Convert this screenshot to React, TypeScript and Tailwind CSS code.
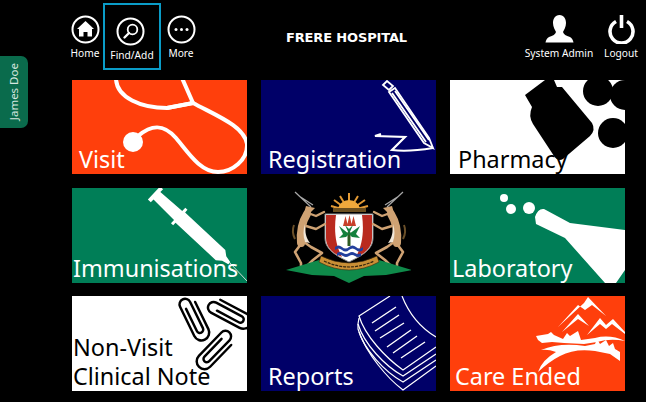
import React from 'react';

function NavItem({ label, children, boxed }: { label: string; children: React.ReactNode; boxed?: boolean }) {
  return (
    <div className={`flex h-[67px] flex-col items-center pt-[12px] ${boxed ? 'w-[58px] border-2 border-[#0a9cc7] pt-[10px]' : 'w-[34px]'}`}>
      <div className={`h-[29px] w-[29px] ${boxed ? 'mr-[3px]' : ''}`}>{children}</div>
      <span className="mt-[2px] whitespace-nowrap text-[10.2px] leading-[15px] text-white">{label}</span>
    </div>
  );
}

function Tile({ bg, dark, label, children }: { bg: string; dark?: boolean; label: React.ReactNode; children: React.ReactNode }) {
  return (
    <div className={`relative overflow-hidden ${bg}`}>
      <svg viewBox="0 0 175 95" className="absolute left-0 top-0 h-[95px] w-[175px]">
        {children}
      </svg>
      <div className={`absolute bottom-0 left-0 text-[23.4px] leading-[29px] ${dark ? 'text-black' : 'text-white'}`}>
        {label}
      </div>
    </div>
  );
}

function Clip({ x, y, angle }: { x: number; y: number; angle: number }) {
  return (
    <path
      transform={`translate(${x} ${y}) rotate(${angle}) scale(1.12)`}
      d="M-4 -10 V12 a3 3 0 0 0 6 0 V-14 a5 5 0 0 0 -10 0 V15 a7 7 0 0 0 14 0 V-12"
      fill="none"
      stroke="#000"
      strokeWidth="2.200"
      strokeLinecap="round"
    />
  );
}

function Antelope() {
  return (
    <g>
      <path d="M25 19 L9 4 M27 17 L13 8" stroke="#a8a8a8" strokeWidth="1.200" fill="none" />
      <path d="M8 37 C6 42 7 47 9 51" stroke="#6b5029" strokeWidth="2" fill="none" />
      <g fill="none" stroke="#cfa273" strokeLinejoin="round" strokeLinecap="round">
        <path d="M21 26 C16 34 14 44 15 55" strokeWidth="8" />
        <path d="M22 25 L30 28 L38 24" strokeWidth="2.400" />
        <path d="M20 38 L30 41 L39 36" strokeWidth="2.400" />
        <path d="M15 56 L9 64 L15 75 L15 80" strokeWidth="2.600" />
        <path d="M18 54 L25 59 L36 65 L27 72 L21 78" strokeWidth="2.600" />
      </g>
      <path d="M20 18 L29 20 L24 25 L18 25 Z" fill="#cfa273" />
      <path d="M19 36 C19 44 20 50 24 55 L19 54 C17 48 17 42 19 36 Z" fill="#f1e7d8" />
    </g>
  );
}

function Crest() {
  return (
    <svg viewBox="0 0 125 95" className="h-[95px] w-[125px]">
      {/* sun */}
      <g stroke="#e39a35" strokeWidth="2">
        <path d="M63 23 L63 5 M63 23 L54 8 M63 23 L72 8 M63 23 L48 12 M63 23 L79 12 M63 23 L45 18 M63 23 L82 18" />
      </g>
      <path d="M52 22 a11 10 0 0 1 22 0 z" fill="#f0a93c" />
      <rect x="47" y="20" width="33" height="4" fill="#6b4f1f" />
      {/* shield */}
      <path d="M39 26 H87 V50 C87 62 75 68 63 74 C51 68 39 62 39 50 Z" fill="#fff" stroke="#8c8c8c" strokeWidth="1" />
      <path d="M40 27 H50 C48 42 49 56 56 69 C46 65 40 59 40 50 Z" fill="#b92a1f" />
      <path d="M86 27 H76 C78 42 77 56 70 69 C80 65 86 59 86 50 Z" fill="#b92a1f" />
      {/* flames */}
      <path d="M57 38 L59.500 28 L62 38 Z M61 38 L63.500 27 L66 38 Z M65 38 L67.500 28 L70 38 Z" fill="#c8402a" />
      {/* tree */}
      <path d="M63 58 V44" stroke="#2d5a22" strokeWidth="3" />
      <path d="M63 46 L53 38 L57 46 L53 50 L60 49 Z M63 46 L74 38 L70 46 L74 50 L66 49 Z M63 46 L59 37 L63 41 L67 37 Z" fill="#13803c" />
      {/* waves */}
      <path d="M49 59 q3.500 -3 7 0 t7 0 t7 0 t7 0 V62 q-3.500 3 -7 0 t-7 0 t-7 0 t-7 0 Z" fill="#233f9c" />
      <path d="M51 65 q3 -2 6 0 t6 0 t6 0 t6 0 V68 q-3 2 -6 0 t-6 0 t-6 0 t-6 0 Z" fill="#233f9c" />
      <Antelope />
      <g transform="translate(126 0) scale(-1 1)">
        <Antelope />
      </g>
      {/* ground and scroll */}
      <path d="M0 82 L33 72 L63 82 L93 72 L126 82 L100 87 L78 88 L63 95 L48 88 L26 87 Z" fill="#0f8a4a" />
      <path d="M35 68 Q63 82 91 68 L93 74 Q63 90 33 74 Z" fill="#c98f35" stroke="#3a2a10" strokeWidth=".6" />
      <path d="M38 73 Q63 85 88 73" fill="none" stroke="#33240d" strokeWidth="1.200" strokeDasharray="3 1" />
    </svg>
  );
}

export default function App() {
  return (
    <div className="relative h-[402px] w-[646px] overflow-hidden bg-black font-['Noto_Sans',sans-serif]">
      <div className="absolute left-0 top-[56px] flex h-[72px] w-[28px] items-center justify-center rounded-r-[7px] bg-[#0a6b4c]">
        <span className="-rotate-90 whitespace-nowrap text-[11.5px] text-[#d5e6df]">James Doe</span>
      </div>

      <header className="flex h-[80px] items-start pl-[68px] pr-[8px] pt-[3px]">
        <NavItem label="Home">
          <svg viewBox="0 0 29 29" className="h-full w-full">
            <circle cx="14.500" cy="14.500" r="13" fill="none" stroke="#fff" strokeWidth="2" />
            <path d="M14.500 6 L23 14 H21 V21.500 H16.500 V17 H12.500 V21.500 H8 V14 H6 Z" fill="#fff" />
          </svg>
        </NavItem>
        <div className="ml-[1px]">
          <NavItem label="Find/Add" boxed>
            <svg viewBox="0 0 29 29" className="h-full w-full">
              <circle cx="14.500" cy="14.500" r="13" fill="none" stroke="#fff" strokeWidth="2" />
              <circle cx="16.500" cy="12.500" r="4.800" fill="none" stroke="#fff" strokeWidth="1.800" />
              <path d="M13 16 L8.500 20.500" stroke="#fff" strokeWidth="2.400" strokeLinecap="round" />
            </svg>
          </NavItem>
        </div>
        <div className="ml-[3px]">
          <NavItem label="More">
            <svg viewBox="0 0 29 29" className="h-full w-full">
              <circle cx="14.500" cy="14.500" r="13" fill="none" stroke="#fff" strokeWidth="2" />
              <circle cx="9" cy="14.500" r="1.500" fill="#fff" />
              <circle cx="14.500" cy="14.500" r="1.500" fill="#fff" />
              <circle cx="20" cy="14.500" r="1.500" fill="#fff" />
            </svg>
          </NavItem>
        </div>
        <h1 className="ml-[88px] mt-[27px] whitespace-nowrap font-['DejaVu_Sans',sans-serif] text-[13px] font-bold leading-4 tracking-[-0.15px] text-white">FRERE HOSPITAL</h1>
        <div className="ml-auto flex">
          <NavItem label="System Admin">
            <svg viewBox="0 0 29 29" className="h-full w-full">
              <path d="M14.500 0 C19 0 21 4 21 8 C21 12 19 15 18 17 C18.500 19 21 21 25 22 C27 23 28 25 28.500 27.500 H0.500 C1 25 2 23 4 22 C8 21 10.500 19 11 17 C10 15 8 12 8 8 C8 4 10 0 14.500 0 Z" fill="#fff" />
            </svg>
          </NavItem>
          <div className="ml-[28px]">
            <NavItem label="Logout">
              <svg viewBox="0 0 29 29" className="h-full w-full">
                <path d="M9 6.500 A11.500 11.500 0 1 0 20 6.500" fill="none" stroke="#fff" strokeWidth="3.600" />
                <path d="M14.500 0 V13" stroke="#fff" strokeWidth="3.600" />
              </svg>
            </NavItem>
          </div>
        </div>
      </header>

      <main className="ml-[72px] grid w-[553px] grid-cols-[175px_175px_175px] grid-rows-[94px_95px_95px] gap-x-[14px] gap-y-[13.5px]">
        <Tile bg="bg-[#ff3f0c]" label={<span className="block pl-[7px]">Visit</span>}>
          <g fill="none" stroke="#fff" strokeWidth="4">
            <path d="M44 -2 C44 18 70 28 95 28 L121 23 L110 -2" />
            <path d="M95 28 L121 23 C145 36 172 46 175 64 C176 80 160 92 146 92 C128 92 116 72 104 58 C92 44 80 44 66 56" />
          </g>
          <circle cx="61" cy="62" r="10" fill="#fff" />
        </Tile>
        <Tile bg="bg-[#000068]" label={<span className="block pl-[7px]">Registration</span>}>
          <g fill="none" stroke="#fff" strokeWidth="1.800">
            <path d="M122 5 L126 1 L132 6 L128 10 Z" />
            <path d="M128 12 L134 8 L168 58 L172 68 L163 63 Z" />
            <path d="M131 13 L165 62 M134 11 L168 60" />
          </g>
          <path d="M172 68 C160 70 145 72 131 70 L144 57 L114 56 L120 54" fill="none" stroke="#fff" strokeWidth="2.200" />
        </Tile>
        <Tile bg="bg-white" dark label={<span className="block pl-[8px]">Pharmacy</span>}>
          <path d="M75 15 L95 0 L104 0 L107 7 L112 7 L142 43 Q146 50 140 56 L113 79 Q108 82 104 76 L83 44 Q78 36 82 27 Z" fill="#000" />
          <circle cx="148" cy="11" r="15" fill="#000" />
          <circle cx="175" cy="15" r="15" fill="#000" />
          <circle cx="163" cy="53" r="15" fill="#000" />
        </Tile>

        <Tile bg="bg-[#007e57]" label={<span className="block pl-[1px]">Immunisations</span>}>
          <path
            transform="translate(82 5) rotate(43)"
            d="M0 -9 L4 -9 L4 -5 L33 -6 L33 -10.500 L36 -10.500 L36 -7 L91 -7 L96 -3 L103 -1.500 V1.500 L96 3 L91 7 L36 7 L36 10.500 L33 10.500 L33 6 L4 5 L4 9 L0 9 Z"
            fill="#fff"
          />
          <path d="M157 74 L175 93" stroke="#cfe3da" strokeWidth="1" />
        </Tile>
        <div className="flex items-start justify-center">
          <Crest />
        </div>
        <Tile bg="bg-[#007e57]" label={<span className="block pl-[2px]">Laboratory</span>}>
          <circle cx="54" cy="10" r="4" fill="#fff" />
          <circle cx="61" cy="21" r="5" fill="#fff" />
          <circle cx="79" cy="20" r="6" fill="#fff" />
          <path d="M85 29 Q88 20 94 21 L120 35 L175 42 V82 L166 95 H155 L115 50 L86 36 Z" fill="#fff" />
        </Tile>

        <Tile
          bg="bg-white"
          dark
          label={
            <div className="pl-[1px]">
              Non-Visit
              <br />
              Clinical Note
            </div>
          }
        >
          <Clip x={123} y={21} angle={-26} />
          <Clip x={157} y={16} angle={-62} />
          <Clip x={145} y={54} angle={44} />
        </Tile>
        <Tile bg="bg-[#000068]" label={<span className="block pl-[7px]">Reports</span>}>
          <g fill="none" stroke="#fff" strokeWidth="1.200">
            <path d="M129 0 L98 20 C104 40 125 62 142 74 L175 51" />
            <path d="M141 0 C148 18 160 32 175 41" />
            <path d="M98 22 L97 28 C103 48 124 70 142 80 L175 58" />
            <path d="M97 28 L97 33 C103 54 124 76 142 86 L175 64" />
            <path d="M98 36 C106 58 126 82 142 94 L175 70" />
          </g>
          <path d="M111 27 L135 11 M114 35 L138 19 M119 42 L143 27 M126 51 L150 34 M132 57 L156 40 M140 62 L164 46" stroke="#fff" strokeWidth="1.400" />
        </Tile>
        <Tile bg="bg-[#ff3f0c]" label={<span className="block pl-[5px]">Care Ended</span>}>
          <g fill="#fff">
            <path d="M108 31 L134 7 L138 1 L156 20 L142 9 L135 14 L128 9 Z" />
            <path d="M112 36 L128 18 L139 30 L128 23 Z" />
            <path d="M137 39 L150 22 L156 29 L163 23 L175 36 V38 L162 28 L156 33 L150 28 Z" />
            <path d="M86 40 L98 38 L101 36 L104 39 L113 43 L117 37 L120 40 L128 35 L131 44 L145 42 Q160 38 175 45 Q160 42 147 46 L134 48 L114 47 L102 46 L92 47 L88 44 Z" />
            <path d="M91 54 Q110 46 135 50 L145 48 L147 43 L150 48 L156 44 L159 50 L163 47 L165 53 L170 56 V65 L160 58 L145 55 Q125 52 110 60 Q100 65 88 76 Q92 64 106 56 Q98 53 91 54 Z" />
          </g>
        </Tile>
      </main>
    </div>
  );
}
